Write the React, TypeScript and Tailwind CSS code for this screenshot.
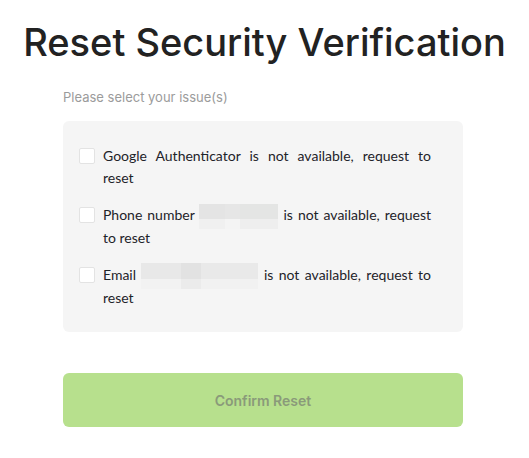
import React from "react";

function Item({ children }: { children: React.ReactNode }) {
  return (
    <label className="flex items-start gap-2">
      <span className="mt-[3px] h-4 w-4 shrink-0 rounded-[2px] border border-[#e3e3e3] bg-white" />
      <span
        className="text-[14px] leading-[22px] text-[#1e2329] text-justify"
        style={{ fontFamily: "Lato, 'Noto Sans', sans-serif" }}
      >
        {children}
      </span>
    </label>
  );
}

export default function App() {
  return (
    <div className="w-[529px] h-[458px] bg-white" style={{ fontFamily: "Inter, 'Noto Sans', sans-serif" }}>
      <h1 className="pt-[18px] text-center text-[38px] leading-[48px] font-medium text-[#222222]">
        Reset Security Verification
      </h1>
      <div className="ml-[63px] w-[400px] mt-[22px]">
        <p className="text-[13px] leading-[18px] text-[#9b9b9b]">Please select your issue(s)</p>
        <div className="mt-[15px] rounded-[6px] bg-[#f5f5f5] pl-[16px] pr-[32px] pt-[24px] pb-[23px] flex flex-col gap-[15px]">
          <Item>Google Authenticator is not available, request to reset</Item>
          <Item>
            Phone number{" "}
            <span className="inline-flex flex-col align-middle w-[79px] h-[25px] -my-[2px]">
              <span className="flex h-[15px]">
                <span className="w-[26px] bg-[#e4e4e4]" />
                <span className="w-[15px] bg-[#e6e6e6]" />
                <span className="w-[38px] bg-[#e4e5e4]" />
              </span>
              <span className="flex h-[10px]">
                <span className="w-[26px] bg-[#f0f0f0]" />
                <span className="w-[15px] bg-[#f4f4f4]" />
                <span className="w-[38px] bg-[#eeeeee]" />
              </span>
            </span>{" "}
            is not available, request to reset
          </Item>
          <Item>
            Email{" "}
            <span className="inline-flex flex-col align-middle w-[117px] h-[26px] -my-[2px]">
              <span className="flex h-[16px]">
                <span className="w-[40px] bg-[#e8e8e8]" />
                <span className="w-[20px] bg-[#e2e2e2]" />
                <span className="w-[57px] bg-[#e9e9e9]" />
              </span>
              <span className="flex h-[10px]">
                <span className="w-[40px] bg-[#f2f2f2]" />
                <span className="w-[20px] bg-[#ebebeb]" />
                <span className="w-[57px] bg-[#f1f1f1]" />
              </span>
            </span>{" "}
            is not available, request to reset
          </Item>
        </div>
        <button className="mt-[41px] w-full h-[54px] rounded-[6px] bg-[#b7e08d] text-[14px] font-semibold text-[#8a9a7a]">
          Confirm Reset
        </button>
      </div>
    </div>
  );
}
